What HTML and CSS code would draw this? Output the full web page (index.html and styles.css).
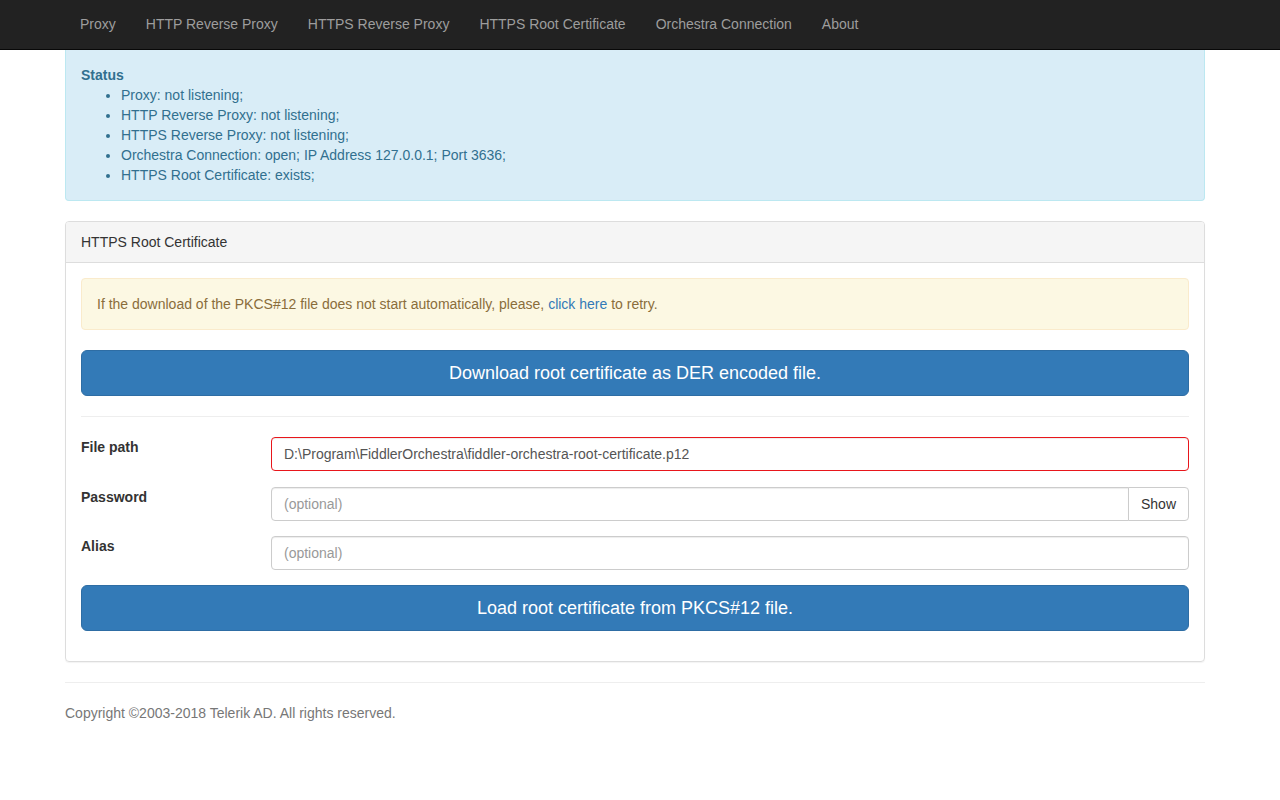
FILE: index.html
```html
<!DOCTYPE html>
<html lang="en">
<head>
<meta charset="utf-8">
<title>Fiddler Orchestra</title>
<link rel="stylesheet" href="styles.css">
</head>
<body>
<nav class="navbar">
  <div class="container">
    <ul class="nav">
      <li><a href="#">Proxy</a></li>
      <li><a href="#">HTTP Reverse Proxy</a></li>
      <li><a href="#">HTTPS Reverse Proxy</a></li>
      <li><a href="#">HTTPS Root Certificate</a></li>
      <li><a href="#">Orchestra Connection</a></li>
      <li><a href="#">About</a></li>
    </ul>
  </div>
</nav>
<main class="container">
  <div class="alert alert-info status">
    <strong>Status</strong>
    <ul class="status-list">
      <li>Proxy: not listening;</li>
      <li>HTTP Reverse Proxy: not listening;</li>
      <li>HTTPS Reverse Proxy: not listening;</li>
      <li>Orchestra Connection: open; IP Address 127.0.0.1; Port 3636;</li>
      <li>HTTPS Root Certificate: exists;</li>
    </ul>
  </div>

  <div class="panel">
    <div class="panel-heading">HTTPS Root Certificate</div>
    <div class="panel-body">
      <div class="alert alert-warning">If the download of the PKCS#12 file does not start automatically, please, <a href="#">click here</a> to retry.</div>
      <button class="btn btn-primary btn-lg">Download root certificate as DER encoded file.</button>
      <hr class="sep">
      <form class="form">
        <div class="form-group form-group-first">
          <label class="label">File path</label>
          <div class="control">
            <input class="input input-error" type="text" value="D:\Program\FiddlerOrchestra\fiddler-orchestra-root-certificate.p12">
          </div>
        </div>
        <div class="form-group">
          <label class="label">Password</label>
          <div class="control input-group">
            <input class="input" type="password" placeholder="(optional)">
            <button type="button" class="btn btn-default">Show</button>
          </div>
        </div>
        <div class="form-group">
          <label class="label">Alias</label>
          <div class="control">
            <input class="input" type="text" placeholder="(optional)">
          </div>
        </div>
        <div class="form-group">
          <button type="button" class="btn btn-primary btn-lg">Load root certificate from PKCS#12 file.</button>
        </div>
      </form>
    </div>
  </div>

  <footer class="footer">
    <p>Copyright ©2003-2018 Telerik AD. All rights reserved.</p>
  </footer>
</main>
</body>
</html>
```

FILE: styles.css
```css
* { box-sizing: border-box; }
html, body { margin: 0; padding: 0; }
body {
  font-family: "Liberation Sans", Arial, Helvetica, sans-serif;
  font-size: 14px;
  line-height: 20px;
  color: #333;
  background: #fff;
  padding-right: 10px;
}
a { color: #337ab7; text-decoration: none; }

.container {
  width: 1170px;
  margin: 0 auto;
  padding: 0 15px;
}

.navbar {
  background: #222;
  border-bottom: 1px solid #080808;
  height: 50px;
  margin-right: -10px;
  padding-right: 10px;
}
.nav {
  list-style: none;
  margin: 0;
  padding: 0;
  display: flex;
}
.nav a {
  display: block;
  padding: 14px 15px 16px;
  line-height: 20px;
  color: #9d9d9d;
}

.alert {
  padding: 15px;
  border: 1px solid transparent;
  border-radius: 4px;
  margin-bottom: 20px;
}
.alert-info {
  background: #d9edf7;
  border-color: #bce8f1;
  color: #31708f;
}
.status {
  border-top: none;
  border-top-left-radius: 0;
  border-top-right-radius: 0;
}
.status strong { font-weight: bold; }
.status-list {
  margin: 0;
  padding-left: 40px;
}
.alert-warning {
  background: #fcf8e3;
  border-color: #faebcc;
  color: #8a6d3b;
}

.panel {
  border: 1px solid #ddd;
  border-radius: 4px;
  box-shadow: 0 1px 1px rgba(0,0,0,.05);
  margin-bottom: 20px;
}
.panel-heading {
  background: #f5f5f5;
  border-bottom: 1px solid #ddd;
  padding: 10px 15px;
  border-radius: 3px 3px 0 0;
  color: #333;
}
.panel-body {
  padding: 15px;
}

.btn {
  display: inline-block;
  font-family: inherit;
  font-size: 14px;
  line-height: 20px;
  padding: 6px 12px;
  border: 1px solid transparent;
  border-radius: 4px;
  cursor: pointer;
  text-align: center;
}
.btn-lg {
  display: block;
  width: 100%;
  padding: 10px 16px;
  font-size: 18px;
  line-height: 24px;
  border-radius: 6px;
}
.btn-primary {
  background: #337ab7;
  border-color: #2e6da4;
  color: #fff;
}
.btn-default {
  background: #fff;
  border-color: #ccc;
  color: #333;
}

.sep {
  border: 0;
  border-top: 1px solid #eee;
  margin: 20px 0;
}

.form { margin: 0; }
.form-group {
  display: flex;
  margin-bottom: 15px;
}
.form-group-first { margin-bottom: 16px; }
.label {
  width: 190px;
  flex: none;
  font-weight: bold;
  line-height: 20px;
}
.control {
  flex: 1;
  display: flex;
}
.input {
  display: block;
  width: 100%;
  height: 34px;
  padding: 6px 12px;
  font-family: inherit;
  font-size: 14px;
  line-height: 20px;
  color: #555;
  background: #fff;
  border: 1px solid #ccc;
  border-radius: 4px;
  box-shadow: inset 0 1px 1px rgba(0,0,0,.075);
}
.input::placeholder { color: #999; }
.input-error { border-color: #e8161b; }
.input-group .input {
  border-top-right-radius: 0;
  border-bottom-right-radius: 0;
}
.input-group .btn {
  margin-left: -1px;
  border-top-left-radius: 0;
  border-bottom-left-radius: 0;
  flex: none;
}

.footer {
  border-top: 1px solid #eee;
  margin-top: 20px;
  padding-top: 20px;
  color: #777;
}
.footer p { margin: 0 0 10px; }
```
